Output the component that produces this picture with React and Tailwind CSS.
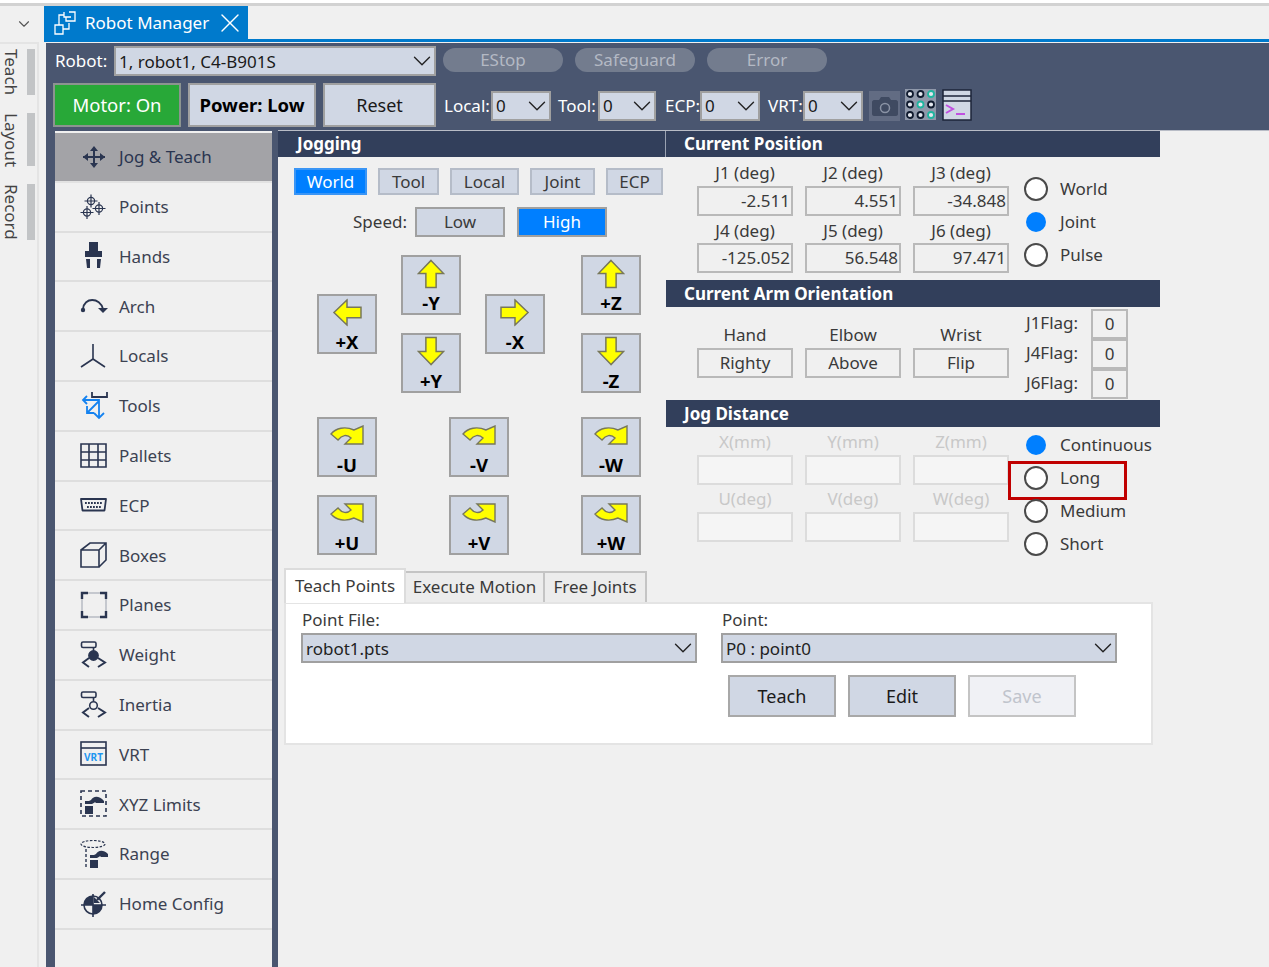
import { ChevronDown, X } from "lucide-react";

const ink = "#2a3550";

function HubIcon({ d, children }) {
  return (
    <svg width="28" height="28" viewBox="0 0 28 28" fill="none" stroke={ink} strokeWidth="1.6" className="shrink-0">
      {d && <path d={d} />}
      {children}
    </svg>
  );
}

function Cross({ x, y }) {
  return (
    <g strokeWidth="1.2">
      <circle cx={x} cy={y} r="3.6" />
      <path d={`M${x - 6.5} ${y}H${x + 6.5}M${x} ${y - 6.5}V${y + 6.5}`} />
    </g>
  );
}

function RobotArm({ x = 0, y = 0 }) {
  return (
    <g transform={`translate(${x} ${y})`} fill={ink} stroke="none">
      <path d="M8 4C10 0 16 -1 21 5V7H13C12 5 11 7 9 8H2V5H6Z" />
      <rect x="2" y="10" width="8" height="8" />
    </g>
  );
}

function GripBall({ solid }) {
  return (
    <>
      <rect x="1.5" y="1" width="14.5" height="5.5" rx="1.5" />
      <path d="M13.5 6.5V10" />
      <circle cx="13.5" cy="14.5" r={solid ? 4.6 : 3.8} fill={solid ? ink : "none"} />
      <path d="M9 17L3 21.5L9 26M18 17L25 21.5L18 26" strokeWidth="2" />
    </>
  );
}

const icons = {
  jog: (
    <HubIcon>
      <path d="M3 14H25M14 5V23" strokeWidth="2" />
      <path d="M3 14L8 10V18ZM25 14L20 10V18ZM14 3L10 8H18ZM14 25L10 20H18Z" fill={ink} stroke="none" />
    </HubIcon>
  ),
  points: (
    <HubIcon>
      <Cross x={11} y={8} />
      <Cross x={7} y={19.5} />
      <Cross x={19} y={15.5} />
    </HubIcon>
  ),
  hands: (
    <HubIcon>
      <g fill={ink} stroke="none">
        <rect x="9" y="0" width="9" height="9" />
        <rect x="5" y="9" width="17" height="6" />
        <path d="M6 17H10V26H7ZM17 17H21L20 26H17Z" />
      </g>
    </HubIcon>
  ),
  arch: (
    <HubIcon>
      <path d="M3 17C4 5 20 5 23 17" strokeWidth="1.8" />
      <circle cx="3" cy="18" r="2.2" fill={ink} stroke="none" />
      <path d="M18 16H28L23 21Z" fill={ink} stroke="none" />
    </HubIcon>
  ),
  locals: <HubIcon d="M13 2V17M13 17L1 25M13 17L25 25" />,
  tools: (
    <HubIcon>
      <path d="M12 0V5H27V0" strokeWidth="1.8" />
      <path d="M3 8H19V25M19 9L7 21M7 4L3 8L7 12M7 14V21H14M14 21L19 26L24 21" stroke="#1482f0" strokeWidth="1.8" />
    </HubIcon>
  ),
  pallets: <HubIcon d="M1 2H26V25H1ZM1 10H26M1 18H26M9 2V25M18 2V25" />,
  ecp: (
    <HubIcon>
      <path d="M1 8H26L24.5 19.5H2.5Z" strokeWidth="1.8" strokeLinejoin="round" />
      <path d="M5 12H23M7 16H21" strokeWidth="1.8" strokeDasharray="1.8 1.2" />
    </HubIcon>
  ),
  boxes: <HubIcon d="M1 9H19V26H1ZM1 9L10 2H26V19L19 26M19 9L26 2" />,
  planes: (
    <HubIcon>
      <path d="M2 2H26V26H2Z" stroke="#9aa0ad" strokeWidth="1" />
      <path d="M2 8V2H8M20 2H26V8M26 20V26H20M8 26H2V20" strokeWidth="2.4" />
    </HubIcon>
  ),
  weight: <HubIcon><GripBall solid /></HubIcon>,
  inertia: <HubIcon><GripBall /></HubIcon>,
  vrt: (
    <HubIcon>
      <rect x="1" y="2" width="25" height="23" strokeWidth="1.6" />
      <path d="M1 8H26" />
      <text x="13.5" y="21" textAnchor="middle" fontSize="10" fontWeight="700" fill="#1e96f0" stroke="none">VRT</text>
    </HubIcon>
  ),
  xyz: (
    <HubIcon>
      <rect x="1" y="1" width="25" height="25" strokeDasharray="4 3" strokeWidth="1.6" />
      <RobotArm x={3} y={6} />
    </HubIcon>
  ),
  range: (
    <HubIcon>
      <ellipse cx="13" cy="4" rx="12" ry="3.5" strokeDasharray="2.5 1.5" strokeWidth="1.2" />
      <path d="M6 9V27" strokeDasharray="3 2" strokeWidth="1.4" />
      <RobotArm x={8} y={10} />
    </HubIcon>
  ),
  home: (
    <HubIcon>
      <path d="M1 15H26M13 4V27" strokeWidth="1.6" />
      <path d="M13 6A9 9 0 0 0 4 15H13ZM13 15H22A9 9 0 0 1 13 24Z" fill={ink} stroke="none" />
      <circle cx="13" cy="15" r="9" />
      <path d="M25 2L17 10" strokeWidth="2.4" />
      <path d="M14 7V13H20Z" fill={ink} stroke="none" />
    </HubIcon>
  ),
};

const hubItems = [
  ["Jog & Teach", "jog"],
  ["Points", "points"],
  ["Hands", "hands"],
  ["Arch", "arch"],
  ["Locals", "locals"],
  ["Tools", "tools"],
  ["Pallets", "pallets"],
  ["ECP", "ecp"],
  ["Boxes", "boxes"],
  ["Planes", "planes"],
  ["Weight", "weight"],
  ["Inertia", "inertia"],
  ["VRT", "vrt"],
  ["XYZ Limits", "xyz"],
  ["Range", "range"],
  ["Home Config", "home"],
];

function Dropdown({ text, className }) {
  return (
    <div className={`flex items-center justify-between bg-[#d0d7e4] border-2 border-[#a0a0a0] text-[#1a1a1a] ${className}`}>
      <span className="pl-[3px] leading-none">{text}</span>
      <ChevronDown size={30} strokeWidth={1.1} className="-mr-[3px] text-[#222] shrink-0" />
    </div>
  );
}

function Pill({ children }) {
  return (
    <div className="w-[120px] h-[24px] rounded-full bg-[#737c8e] text-[#b4b9c4] flex items-center justify-center">
      {children}
    </div>
  );
}

function ArrowGlyph({ rotate }) {
  return (
    <svg width="28" height="31" viewBox="0 0 30 32" className={rotate}>
      <path d="M15 2L28.5 16H20.5V31H9.5V16H1.5Z" fill="#ffff00" stroke="#77775a" strokeWidth="1.6" />
    </svg>
  );
}

function TurnGlyph({ flip }) {
  return (
    <svg width="34" height="20" viewBox="0 0 34 20" className={flip ? "-scale-y-100" : ""}>
      <path d="M1 9C6 3 15 1 24 5L33 1V19H15L21 13C17 9 12 10 8 15Z" fill="#ffff00" stroke="#77775a" strokeWidth="1.4" />
    </svg>
  );
}

function JogButton({ label, children }) {
  return (
    <div className="w-[60px] h-[60px] bg-[#d0d7e4] border-2 border-[#a0a0a0] flex flex-col items-center">
      <div className="h-[32px] flex items-center justify-center">{children}</div>
      <span className="mt-[5px] font-bold text-black text-[18.5px] leading-[18px]">{label}</span>
    </div>
  );
}

function SectionBar({ children, className }) {
  return (
    <div className={`bg-[#323f5b] text-white font-bold flex items-center text-[17px] ${className}`}>
      {children}
    </div>
  );
}

function ValueField({ label, value, disabled, align = "right", labelH = "h-[29px]" }) {
  return (
    <div className="w-[96px] flex flex-col">
      <div className={`${labelH} flex items-center justify-center ${disabled ? "text-[#c8c8c8]" : ""}`}>{label}</div>
      <div
        className={`h-[30px] border-2 flex items-center px-[1px] ${
          disabled ? "border-[#dcdcdc] bg-[#f5f5f5]" : "border-[#b9b9b9]"
        } ${align === "right" ? "justify-end" : "justify-center"}`}
      >
        {value}
      </div>
    </div>
  );
}

function Radio({ label, on, marked }) {
  return (
    <div className="relative h-[33px] flex items-center gap-[12px]">
      {on ? (
        <span className="w-[24px] h-[24px] p-[2px]"><span className="block w-full h-full rounded-full bg-[#007fff]" /></span>
      ) : (
        <span className="w-[24px] h-[24px] rounded-full bg-white border-2 border-[#4a4a4a]" />
      )}
      <span>{label}</span>
      {marked && <span className="absolute left-[-16px] top-0 w-[119px] h-[39px] border-[3px] border-[#c00000]" />}
    </div>
  );
}

function FlatButton({ children, active, className }) {
  return (
    <div
      className={`flex items-center justify-center border-2 ${
        active ? "bg-[#007fff] text-white border-[#3a95f5]" : "bg-[#d0d7e4] border-[#b5bcc8]"
      } ${className}`}
    >
      {children}
    </div>
  );
}

export default function App() {
  return (
    <div className="w-[1269px] h-[967px] overflow-hidden bg-[#f0f0f0] text-[#3a3a3a] text-[17px] flex flex-col [font-family:'Noto_Sans',sans-serif]">
      <div className="h-[3px] bg-white shrink-0" />
      <div className="h-[3px] bg-[#d2d2d2] shrink-0" />
      <div className="flex-1 flex min-h-0">
        {/* left dock strip */}
        <div className="w-[44px] shrink-0">
          <div className="w-[38px] h-[36px] flex items-center justify-end pr-[5px]">
            <ChevronDown size={18} strokeWidth={1.5} className="text-[#555]" />
          </div>
          <div className="w-[39px] h-[925px] border-t-2 border-r-2 border-[#e4e4e4] pt-[5px] flex flex-col gap-[18px]">
            {[["Teach", "h-[46px]"], ["Layout", "h-[53px]"], ["Record", "h-[56px]"]].map(([name, h]) => (
              <div key={name} className={`flex justify-between ${h} pl-[2px] pr-[2px]`}>
                <span className="[writing-mode:vertical-rl] text-[17px] leading-[18px] text-[#444]">{name}</span>
                <span className="w-[8px] h-full bg-[#c2c4c6]" />
              </div>
            ))}
          </div>
        </div>

        <div className="flex-1 flex flex-col min-w-0">
          {/* document tab */}
          <div className="h-[33px] flex shrink-0">
            <div className="w-[204px] bg-[#007acc] text-white flex items-center pl-[10px] gap-[8px]">
              <svg width="23" height="25" viewBox="0 0 23 25" fill="none" stroke="#fff" strokeWidth="1.3" className="shrink-0">
                <path d="M1 15H9V24H1ZM9 19H15V13M5 15V5H10M15 2H21V7M10 2V7H17M21 7V11H12V7" />
              </svg>
              <span>Robot Manager</span>
              <X size={32} strokeWidth={1} className="-ml-[3px] shrink-0" />
            </div>
          </div>
          <div className="h-[3px] bg-[#007acc] shrink-0" />

          <div className="ml-[2px] mt-[1px] flex-1 flex flex-col min-h-0 bg-[#4a5670]">
            {/* controller bar */}
            <div className="h-[87px] shrink-0 text-white">
              <div className="h-[36px] flex items-center">
                <span className="w-[68px] pl-[9px]">Robot:</span>
                <Dropdown text="1, robot1, C4-B901S" className="w-[322px] h-[30px]" />
                <div className="flex gap-[12px] ml-[7px] mb-[2px]">
                  <Pill>EStop</Pill>
                  <Pill>Safeguard</Pill>
                  <Pill>Error</Pill>
                </div>
              </div>
              <div className="flex items-start pl-[7px] mt-[4px]">
                <div className="w-[128px] h-[44px] bg-[#28a838] border-2 border-[#8c9490] flex items-center justify-center text-[18.5px]">Motor: On</div>
                <div className="w-[128px] h-[44px] ml-[7px] bg-[#d0d7e4] border-2 border-[#a0a0a0] flex items-center justify-center text-black font-bold text-[18.5px]">Power: Low</div>
                <div className="w-[113px] h-[44px] ml-[7px] bg-[#d0d7e4] border-2 border-[#a0a0a0] flex items-center justify-center text-[#1a1a1a] text-[18px]">Reset</div>
                <div className="flex items-center h-[29px] mt-[8px] ml-[8px]">
                  <span className="w-[47px]">Local:</span>
                  <Dropdown text="0" className="w-[60px] h-[30px]" />
                  <span className="ml-[7px] w-[40px]">Tool:</span>
                  <Dropdown text="0" className="w-[58px] h-[30px]" />
                  <span className="ml-[9px] w-[35px]">ECP:</span>
                  <Dropdown text="0" className="w-[60px] h-[30px]" />
                  <span className="ml-[8px] w-[35px]">VRT:</span>
                  <Dropdown text="0" className="w-[60px] h-[30px]" />
                  <div className="w-[31px] h-[30px] ml-[6px] bg-[#626c83] flex items-center justify-center">
                    <svg width="26" height="22" viewBox="0 0 26 22">
                      <path d="M2 5H7L9 2H17L19 5H24C25 5 26 6 26 7V19C26 20 25 21 24 21H2C1 21 0 20 0 19V7C0 6 1 5 2 5Z" fill="#3f4a61" />
                      <circle cx="13" cy="13" r="4.5" fill="none" stroke="#8a93a5" strokeWidth="1.5" />
                    </svg>
                  </div>
                  <svg width="31" height="31" viewBox="0 0 31 31" fill="none" strokeWidth="1.8" className="ml-[5px] -mt-[2px]">
                    <rect x="0" y="0" width="31" height="31" fill="#8f98aa" />
                    {[5, 15.5, 26].map((y) =>
                      [5, 15.5, 26].map((x) => (
                        <circle
                          key={`${x}-${y}`}
                          cx={x}
                          cy={y}
                          r="3"
                          fill="#e4e8ef"
                          stroke={(x === 26 && y !== 15.5) || (x === 15.5 && y === 15.5) ? "#1fb5a0" : "#0f1a2e"}
                        />
                      ))
                    )}
                  </svg>
                  <svg width="30" height="32" viewBox="0 0 30 32" fill="none" className="ml-[6px] -mt-[2px]">
                    <rect x="1" y="1" width="28" height="30" fill="#d0d7e4" stroke="#1c2538" strokeWidth="1.5" />
                    <path d="M1 7H29M1 12H29" stroke="#1c2538" strokeWidth="1.5" />
                    <path d="M4 16L11 20L4 24" stroke="#c050e0" strokeWidth="2" />
                    <path d="M14 25H23" stroke="#c050e0" strokeWidth="2" />
                  </svg>
                </div>
              </div>
            </div>

            <div className="flex-1 flex min-h-0">
              {/* hub list */}
              <div className="w-[232px] shrink-0 pl-[9px] pr-[6px] pt-[1px]">
                <div className="h-full bg-[#f0f0f0] pt-[2px]">
                  {hubItems.map(([name, key], i) => (
                    <div
                      key={name}
                      className={`h-[49.8px] flex items-center gap-[11px] pl-[25px] border-b-2 ${
                        i === 0 ? "bg-[#a3a3a7] border-[#e2e2e2] text-[#2a3550]" : "border-[#dedede] text-[#3c4252]"
                      }`}
                    >
                      {icons[key]}
                      <span>{name}</span>
                    </div>
                  ))}
                </div>
              </div>

              <div className="flex-1 bg-[#f0f0f0] border-t border-[#b8bcc6] flex flex-col min-w-0">
                <div className="h-[437px] flex shrink-0">
                  {/* jogging */}
                  <div className="w-[388px] shrink-0">
                    <SectionBar className="pl-[19px] h-[26px] border-r border-[#9aa2b2]">Jogging</SectionBar>
                    <div className="flex gap-[11px] pl-[16px] pt-[11px]">
                      <FlatButton active className="w-[73px] h-[27px]">World</FlatButton>
                      <FlatButton className="w-[61px] h-[27px]">Tool</FlatButton>
                      <FlatButton className="w-[69px] h-[27px]">Local</FlatButton>
                      <FlatButton className="w-[65px] h-[27px]">Joint</FlatButton>
                      <FlatButton className="w-[57px] h-[27px]">ECP</FlatButton>
                    </div>
                    <div className="flex items-center mt-[12px]">
                      <span className="w-[129px] text-right">Speed:</span>
                      <div className="ml-[8px] w-[90px] h-[30px] bg-[#d0d7e4] border-2 border-[#a0a0a0] flex items-center justify-center">Low</div>
                      <div className="ml-[12px] w-[90px] h-[30px] bg-[#007fff] border-2 border-[#a0a0a0] text-white flex items-center justify-center">High</div>
                    </div>
                    <div className="flex mt-[18px] pl-[39px]">
                      <div className="pt-[39px]">
                        <JogButton label="+X"><ArrowGlyph rotate="-rotate-90" /></JogButton>
                      </div>
                      <div className="ml-[24px] flex flex-col gap-[18px]">
                        <JogButton label="-Y"><ArrowGlyph /></JogButton>
                        <JogButton label="+Y"><ArrowGlyph rotate="rotate-180" /></JogButton>
                      </div>
                      <div className="ml-[24px] pt-[39px]">
                        <JogButton label="-X"><ArrowGlyph rotate="rotate-90" /></JogButton>
                      </div>
                      <div className="ml-[36px] flex flex-col gap-[18px]">
                        <JogButton label="+Z"><ArrowGlyph /></JogButton>
                        <JogButton label="-Z"><ArrowGlyph rotate="rotate-180" /></JogButton>
                      </div>
                    </div>
                    <div className="grid grid-cols-[60px_60px_60px] gap-x-[72px] gap-y-[18px] mt-[24px] ml-[39px]">
                      {["-U", "-V", "-W"].map((l) => (
                        <JogButton key={l} label={l}><TurnGlyph /></JogButton>
                      ))}
                      {["+U", "+V", "+W"].map((l) => (
                        <JogButton key={l} label={l}><TurnGlyph flip /></JogButton>
                      ))}
                    </div>
                  </div>

                  {/* readouts */}
                  <div className="w-[494px] shrink-0">
                    <SectionBar className="pl-[18px] h-[26px]">Current Position</SectionBar>
                    <div className="h-[123px] flex pl-[31px]">
                      <div className="w-[312px] grid grid-cols-[96px_96px_96px] gap-x-[12px] content-start">
                        <ValueField label="J1 (deg)" value="-2.511" labelH="h-[29px] pt-[3px]" />
                        <ValueField label="J2 (deg)" value="4.551" labelH="h-[29px] pt-[3px]" />
                        <ValueField label="J3 (deg)" value="-34.848" labelH="h-[29px] pt-[3px]" />
                        <ValueField label="J4 (deg)" value="-125.052" labelH="h-[27px] pt-[2px]" />
                        <ValueField label="J5 (deg)" value="56.548" labelH="h-[27px] pt-[2px]" />
                        <ValueField label="J6 (deg)" value="97.471" labelH="h-[27px] pt-[2px]" />
                      </div>
                      <div className="ml-[15px] pt-[15px]">
                        <Radio label="World" />
                        <Radio label="Joint" on />
                        <Radio label="Pulse" />
                      </div>
                    </div>
                    <SectionBar className="pl-[18px] h-[27px]">Current Arm Orientation</SectionBar>
                    <div className="h-[93px] flex pl-[31px]">
                      <div className="w-[312px] flex gap-[12px] pt-[12px]">
                        <ValueField label="Hand" value="Righty" align="center" labelH="h-[29px] pt-[3px]" />
                        <ValueField label="Elbow" value="Above" align="center" labelH="h-[29px] pt-[3px]" />
                        <ValueField label="Wrist" value="Flip" align="center" labelH="h-[29px] pt-[3px]" />
                      </div>
                      <div className="ml-[17px] pt-[2px]">
                        {["J1Flag:", "J4Flag:", "J6Flag:"].map((f) => (
                          <div key={f} className="h-[30px] flex items-center">
                            <span className="w-[65px] pb-[2px]">{f}</span>
                            <span className="w-[37px] h-[30px] border-2 border-[#b9b9b9] flex items-center justify-center">0</span>
                          </div>
                        ))}
                      </div>
                    </div>
                    <SectionBar className="pl-[18px] h-[27px]">Jog Distance</SectionBar>
                    <div className="flex pl-[31px]">
                      <div className="w-[312px] grid grid-cols-[96px_96px_96px] gap-x-[12px] content-start">
                        <ValueField disabled label="X(mm)" value="" labelH="h-[28px] pt-[1px]" />
                        <ValueField disabled label="Y(mm)" value="" labelH="h-[28px] pt-[1px]" />
                        <ValueField disabled label="Z(mm)" value="" labelH="h-[28px] pt-[1px]" />
                        <ValueField disabled label="U(deg)" value="" labelH="h-[27px] pt-[1px]" />
                        <ValueField disabled label="V(deg)" value="" labelH="h-[27px] pt-[1px]" />
                        <ValueField disabled label="W(deg)" value="" labelH="h-[27px] pt-[1px]" />
                      </div>
                      <div className="ml-[15px] pt-[1px]">
                        <Radio label="Continuous" on />
                        <Radio label="Long" marked />
                        <Radio label="Medium" />
                        <Radio label="Short" />
                      </div>
                    </div>
                  </div>
                </div>

                {/* teach tabs */}
                <div className="ml-[6px] w-[869px]">
                  <div className="flex items-end h-[34px]">
                    <div className="w-[122px] h-[35px] bg-white border-2 border-b-0 border-[#dcdcdc] flex items-center justify-center relative z-10 -mb-[1px] pb-[2px]">Teach Points</div>
                    <div className="w-[139px] h-[31px] bg-[#ececec] border-2 border-l-0 border-b-0 border-[#c4c4c4] flex items-center justify-center pb-[1px]">Execute Motion</div>
                    <div className="w-[102px] h-[31px] bg-[#ececec] border-2 border-l-0 border-b-0 border-[#c4c4c4] flex items-center justify-center pb-[1px]">Free Joints</div>
                  </div>
                  <div className="h-[143px] bg-white border-2 border-[#e4e4e4] pl-[15px] pt-[5px]">
                    <div className="flex gap-[24px]">
                      <div className="w-[396px]">
                        <div className="h-[24px] flex items-center pl-[1px] pb-[2px]">Point File:</div>
                        <Dropdown text="robot1.pts" className="h-[30px] text-[#222]" />
                      </div>
                      <div className="w-[396px]">
                        <div className="h-[24px] flex items-center pl-[1px] pb-[2px]">Point:</div>
                        <Dropdown text="P0 : point0" className="h-[30px] text-[#222]" />
                        <div className="flex gap-[12px] mt-[12px] ml-[7px] text-[18px]">
                          <div className="w-[108px] h-[42px] bg-[#d0d7e4] border-2 border-[#a8a8a8] flex items-center justify-center text-[#1a1a1a]">Teach</div>
                          <div className="w-[108px] h-[42px] bg-[#d0d7e4] border-2 border-[#a8a8a8] flex items-center justify-center text-[#1a1a1a]">Edit</div>
                          <div className="w-[108px] h-[42px] bg-[#f0f1f5] border-2 border-[#c4c4c4] flex items-center justify-center text-[#c0c4cc]">Save</div>
                        </div>
                      </div>
                    </div>
                  </div>
                </div>
              </div>
            </div>
          </div>
        </div>
      </div>
    </div>
  );
}
